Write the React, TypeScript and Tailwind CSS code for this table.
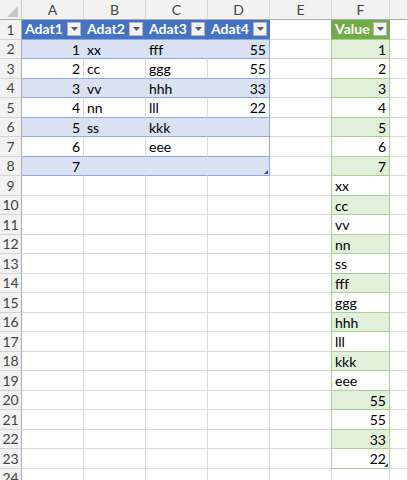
import React from "react";

const COLS = ["A", "B", "C", "D", "E", "F", ""];

const table1: (string | number)[][] = [
  [1, "xx", "fff", 55],
  [2, "cc", "ggg", 55],
  [3, "vv", "hhh", 33],
  [4, "nn", "lll", 22],
  [5, "ss", "kkk", ""],
  [6, "", "eee", ""],
  [7, "", "", ""],
];

const values: (string | number)[] = [
  1, 2, 3, 4, 5, 6, 7,
  "xx", "cc", "vv", "nn", "ss", "fff", "ggg", "hhh", "lll", "kkk", "eee",
  55, 55, 33, 22,
];

function FilterButton() {
  return (
    <span className="ml-auto mr-[2px] flex h-[14px] w-[14px] shrink-0 items-center justify-center border border-[#b4b4b4] bg-[#f3f3f3]">
      <svg width="7" height="4" viewBox="0 0 7 4">
        <path d="M0 0h7L3.5 4z" fill="#595959" />
      </svg>
    </span>
  );
}

function ResizeHandle() {
  return (
    <svg className="absolute bottom-[1px] right-[1px]" width="4" height="4" viewBox="0 0 4 4">
      <path d="M4 0v4H0z" fill="#2f5597" />
    </svg>
  );
}

function Cell({ row, col }: { row: number; col: number }) {
  // row: excel row (1-based), col: 0..6 for A..G
  let bg = "bg-white";
  let br = "border-r-[#dadada]";
  let bb = "border-b-[#dadada]";
  let content: React.ReactNode = null;
  let numeric = false;
  let header = false;
  let handle = false;

  const inT1 = row <= 8 && col <= 3;
  const inT2 = row <= 23 && col === 5;

  if (inT1) {
    if (row === 1) {
      bg = "bg-[#4472c4]";
      br = "border-r-[#4472c4]";
      bb = "border-b-[#8ea9db]";
      header = true;
      content = ["Adat1", "Adat2", "Adat3", "Adat4"][col];
    } else {
      const banded = row % 2 === 0;
      bg = banded ? "bg-[#d9e1f2]" : "bg-white";
      br = col === 3 ? "border-r-[#8ea9db]" : banded ? "border-r-[#d9e1f2]" : "border-r-[#dadada]";
      bb = "border-b-[#8ea9db]";
      const v = table1[row - 2][col];
      content = v;
      numeric = typeof v === "number";
      handle = row === 8 && col === 3;
    }
  } else if (inT2) {
    if (row === 1) {
      bg = "bg-[#70ad47]";
      br = "border-r-[#70ad47]";
      bb = "border-b-[#a9d08e]";
      header = true;
      content = "Value";
    } else {
      const banded = row % 2 === 0;
      bg = banded ? "bg-[#e2efda]" : "bg-white";
      br = "border-r-[#a9d08e]";
      bb = "border-b-[#a9d08e]";
      const v = values[row - 2];
      content = v;
      numeric = typeof v === "number";
      handle = row === 23;
    }
  } else if (col === 4 && row <= 23) {
    br = row === 1 ? "border-r-[#70ad47]" : "border-r-[#a9d08e]";
  }

  return (
    <div
      className={`relative flex items-center overflow-hidden border-r border-b ${bg} ${br} ${bb} ${
        numeric ? "justify-end pr-[3px]" : "pl-[3px]"
      } ${header ? "font-bold text-white" : "text-black"}`}
    >
      {header ? (
        <>
          <span>{content}</span>
          <FilterButton />
        </>
      ) : (
        <span className="pt-[2px]">{content}</span>
      )}
      {handle && <ResizeHandle />}
    </div>
  );
}

export default function App() {
  const rows = Array.from({ length: 24 }, (_, i) => i + 1);

  return (
    <div
      className="grid h-[480px] w-[408px] grid-cols-[22px_62px_62px_62px_62px_62px_58px_1fr] grid-rows-[20px_repeat(24,19.5px)] overflow-hidden bg-white text-[14px] leading-none"
      style={{ fontFamily: "Lato, 'Liberation Sans', sans-serif" }}
    >
      <div className="relative border-r border-b border-r-[#c8c8c8] border-b-[#ababab] bg-[#f2f2f2]">
        <svg className="absolute bottom-[2px] right-[3px]" width="11" height="11" viewBox="0 0 11 11">
          <path d="M11 0v11H0z" fill="#c8c8c8" />
        </svg>
      </div>
      {COLS.map((c, i) => (
        <div
          key={i}
          className="flex items-center justify-center border-r border-b border-r-[#d4d4d4] border-b-[#ababab] bg-[#f2f2f2] pt-[1px] text-[#444]"
        >
          {c}
        </div>
      ))}

      {rows.map((r) => (
        <React.Fragment key={r}>
          <div className="flex items-center justify-center border-r border-b border-r-[#ababab] border-b-[#d4d4d4] bg-[#f2f2f2] pt-[1px] text-[#444]">
            {r}
          </div>
          {COLS.map((_, ci) => (
            <Cell key={ci} row={r} col={ci} />
          ))}
        </React.Fragment>
      ))}
    </div>
  );
}
